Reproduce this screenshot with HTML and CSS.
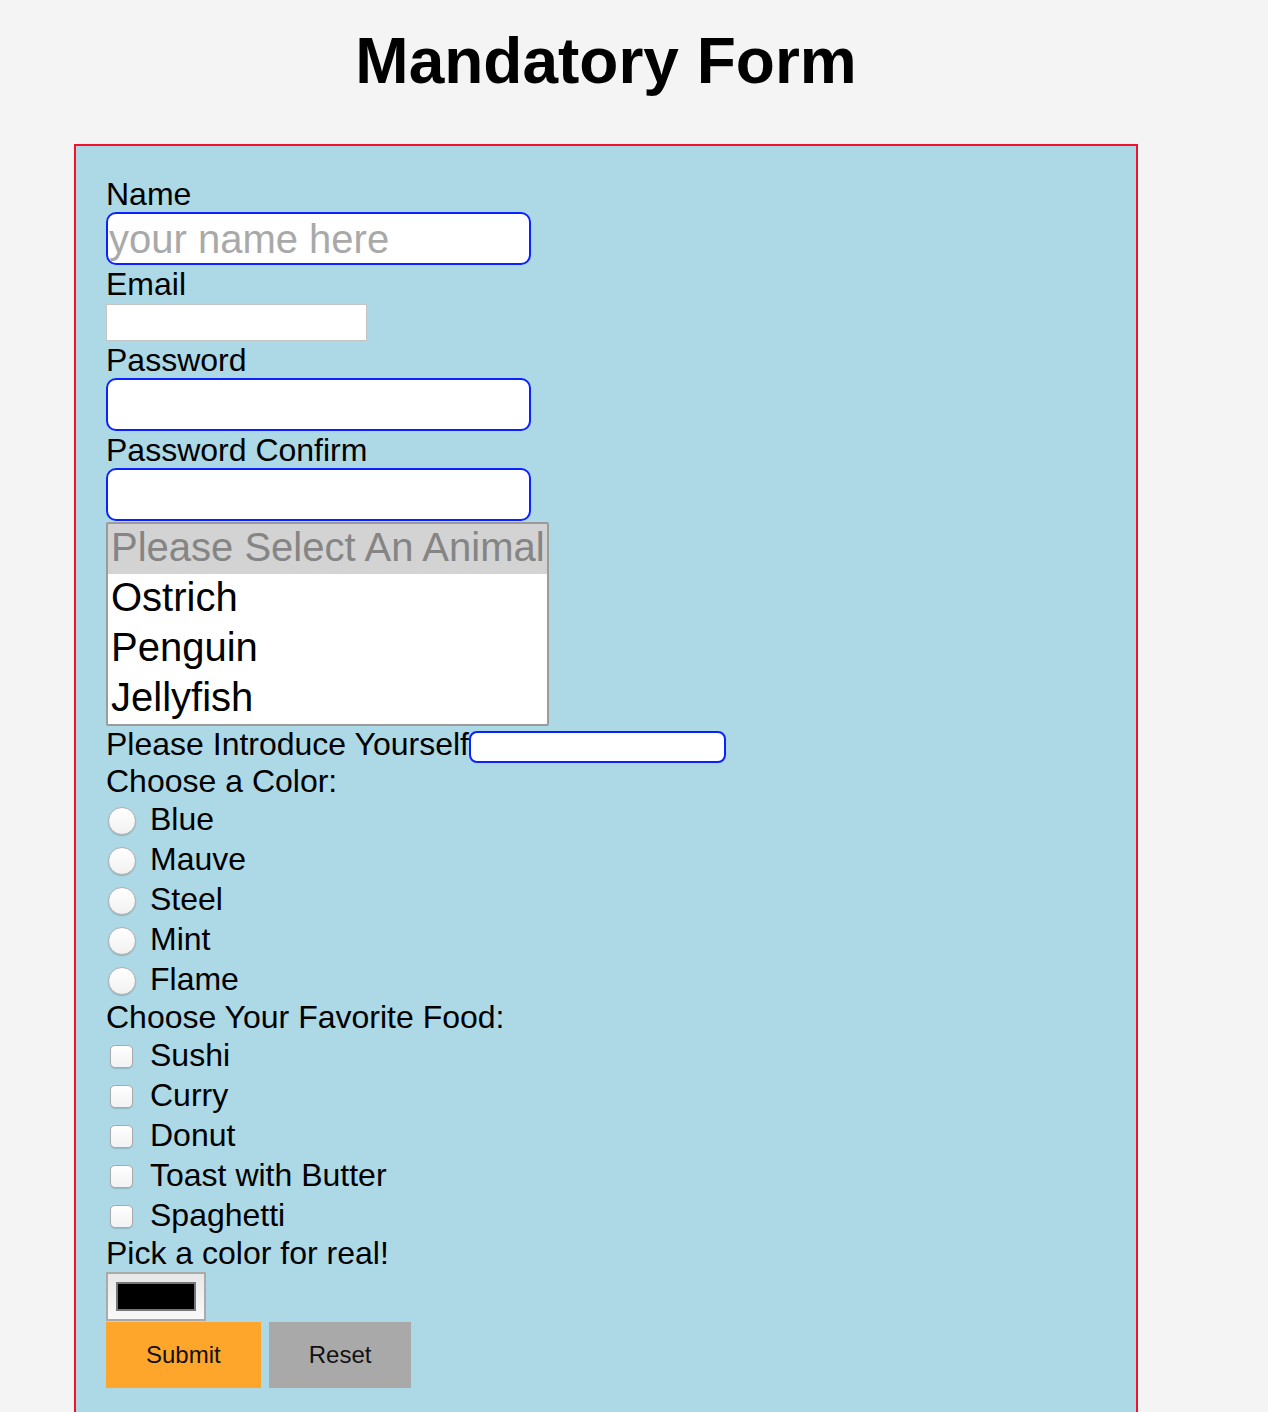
FILE: index.html
```html
<!DOCTYPE html>
<html lang="en">
<head>
<meta charset="utf-8">
<title>Mandatory Form</title>
<link rel="stylesheet" href="styles.css">
</head>
<body>
<div class="page">
  <h1 class="title">Mandatory Form</h1>
  <form class="form">
    <label class="field-label" for="name">Name</label>
    <input class="blue-input" id="name" type="text" placeholder="your name here">
    <label class="field-label" for="email">Email</label>
    <input class="plain-input" id="email" type="email">
    <label class="field-label" for="pw">Password</label>
    <input class="blue-input" id="pw" type="password">
    <label class="field-label" for="pw2">Password Confirm</label>
    <input class="blue-input" id="pw2" type="password">
    <select class="animal-select" size="4">
      <option class="animal-placeholder" disabled>Please Select An Animal</option>
      <option>Ostrich</option>
      <option>Penguin</option>
      <option>Jellyfish</option>
    </select>
    <div class="intro-row">
      <label class="intro-label" for="intro">Please Introduce Yourself</label><textarea class="intro-input" id="intro" rows="1"></textarea>
    </div>
    <div class="field-label">Choose a Color:</div>
    <label class="choice-row"><input class="radio" type="radio" name="color"><span>Blue</span></label>
    <label class="choice-row"><input class="radio" type="radio" name="color"><span>Mauve</span></label>
    <label class="choice-row"><input class="radio" type="radio" name="color"><span>Steel</span></label>
    <label class="choice-row"><input class="radio" type="radio" name="color"><span>Mint</span></label>
    <label class="choice-row"><input class="radio" type="radio" name="color"><span>Flame</span></label>
    <div class="field-label">Choose Your Favorite Food:</div>
    <label class="choice-row"><input class="check" type="checkbox"><span>Sushi</span></label>
    <label class="choice-row"><input class="check" type="checkbox"><span>Curry</span></label>
    <label class="choice-row"><input class="check" type="checkbox"><span>Donut</span></label>
    <label class="choice-row"><input class="check" type="checkbox"><span>Toast with Butter</span></label>
    <label class="choice-row"><input class="check" type="checkbox"><span>Spaghetti</span></label>
    <label class="field-label" for="realcolor">Pick a color for real!</label>
    <input class="color-input" id="realcolor" type="color" value="#000000">
    <div class="buttons">
      <button class="btn btn-submit" type="submit">Submit</button>
      <button class="btn btn-reset" type="reset">Reset</button>
    </div>
  </form>
</div>
</body>
</html>
```

FILE: styles.css
```css
html, body {
  margin: 0;
  padding: 0;
  background: #f4f4f4;
}
body {
  font-family: "Liberation Sans", Arial, Helvetica, sans-serif;
  font-size: 32px;
  color: #000;
}
.page {
  width: 1064px;
  margin-left: 74px;
}
.title {
  margin: 24px 0 46px;
  font-size: 64px;
  line-height: 74px;
  font-weight: bold;
  text-align: center;
}
.form {
  box-sizing: border-box;
  background: #add8e6;
  border: 2px solid #f2122a;
  padding: 30px 30px 40px;
  min-height: 1300px;
  display: flex;
  flex-direction: column;
  align-items: flex-start;
}
.field-label {
  display: block;
  height: 36px;
  line-height: 37px;
}
.blue-input {
  box-sizing: border-box;
  width: 425px;
  height: 53px;
  margin: 0 0 1px;
  padding: 2px 2px 0 1px;
  border: 2px solid #0a22ff;
  border-radius: 10px;
  background: #fff;
  font-family: inherit;
  font-size: 40px;
  outline: none;
}
.blue-input::placeholder {
  color: #a9a9a9;
}
.plain-input {
  box-sizing: border-box;
  width: 261px;
  height: 37px;
  margin: 2px 0 1px;
  padding: 0 2px;
  border: 1px solid #c4c4c4;
  background: #fff;
  font-family: inherit;
  font-size: 26px;
  outline: none;
}
.animal-select {
  box-sizing: border-box;
  width: 443px;
  height: 204px;
  margin: 0;
  padding: 0;
  border: 2px solid #9b9b9b;
  background: #fff;
  font-family: inherit;
  font-size: 40px;
  overflow: hidden;
  outline: none;
}
.animal-select option {
  padding: 1px 4px 1px 3px;
  color: #000;
}
.animal-select .animal-placeholder {
  background: #d3d3d3;
  color: #858585;
}
.intro-row {
  display: flex;
  align-items: flex-start;
  height: 37px;
}
.intro-label {
  line-height: 37px;
}
.intro-input {
  box-sizing: border-box;
  width: 257px;
  height: 32px;
  margin: 5px 0 0;
  padding: 0 4px;
  border: 2px solid #0a22ff;
  border-radius: 8px;
  background: #fff;
  font-family: inherit;
  font-size: 20px;
  resize: none;
  outline: none;
  overflow: hidden;
}
.choice-row {
  display: flex;
  align-items: center;
  height: 40px;
  line-height: 40px;
}
.radio {
  appearance: none;
  -webkit-appearance: none;
  box-sizing: border-box;
  width: 28px;
  height: 28px;
  margin: 4px 14px 0 2px;
  border: 1px solid #b0b0b0;
  border-radius: 50%;
  background: linear-gradient(#ffffff, #f1f1f1);
  box-shadow: 0 1px 1px rgba(0, 0, 0, 0.2);
}
.check {
  appearance: none;
  -webkit-appearance: none;
  box-sizing: border-box;
  width: 23px;
  height: 23px;
  margin: 3px 17px 0 4px;
  border: 1px solid #aaaaaa;
  border-radius: 5px;
  background: linear-gradient(#ffffff, #f2f2f2);
  box-shadow: 0 1px 1px rgba(0, 0, 0, 0.15);
}
.color-input {
  appearance: none;
  -webkit-appearance: none;
  box-sizing: border-box;
  width: 100px;
  height: 49px;
  margin: 1px 0 0;
  padding: 8px;
  border: 2px solid #aaaaaa;
  background: linear-gradient(#e8e8e8, #f9f9f9);
  cursor: pointer;
}
.color-input::-webkit-color-swatch-wrapper {
  padding: 0;
}
.color-input::-webkit-color-swatch {
  border: 2px solid #777;
  border-radius: 0;
}
.buttons {
  display: flex;
  gap: 8px;
  margin-top: 1px;
}
.btn {
  height: 66px;
  padding: 0 40px;
  border: none;
  font-family: inherit;
  font-size: 24px;
  color: #111;
  cursor: pointer;
}
.btn-submit {
  background: #fea62b;
}
.btn-reset {
  background: #a9a9a9;
}
```
